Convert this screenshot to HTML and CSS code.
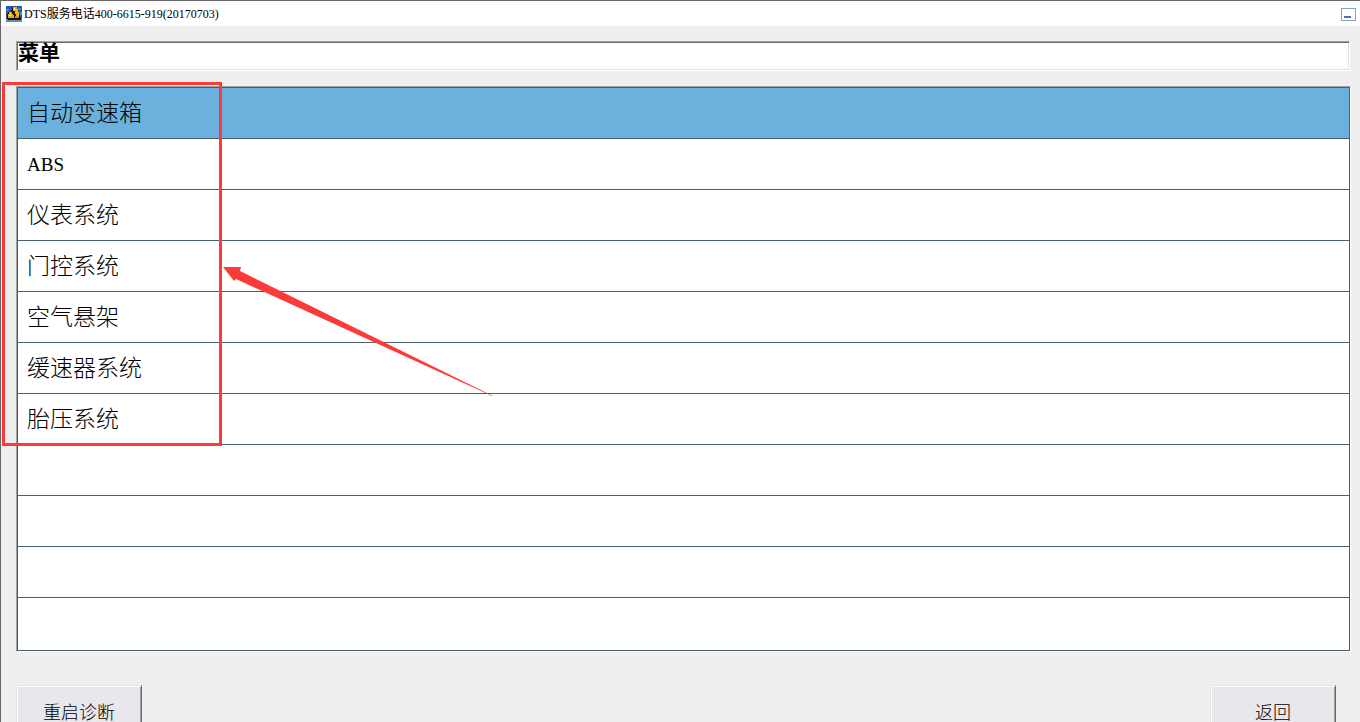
FILE: index.html
```html
<!DOCTYPE html>
<html lang="zh-CN">
<head>
<meta charset="utf-8">
<meta name="viewport" content="width=device-width, initial-scale=1">
<title>DTS服务电话400-6615-919(20170703)</title>
<link rel="stylesheet" href="styles.css">
</head>
<body>
<div class="window">
  <header class="titlebar">
    <svg class="app-icon" viewBox="0 0 16 16" shape-rendering="crispEdges" aria-hidden="true">
      <rect width="16" height="16" fill="#2458ae"/>
      <path d="M0 3h3v2H0zM12 2h3v2h-3zM14 6h2v3h-2z" fill="#4384cf"/>
      <path d="M0 13h16v3H0z" fill="#6d88ae"/>
      <path d="M6 1h5v2h1v3h1v3h1v2h1v3H2v-1H1V8h1V6h3V4h1z" fill="#171309"/>
      <path d="M7 1h4v2h1v3h1v4h-3V8H9V5H7z" fill="#f3b414"/>
      <path d="M3 6h3v2h1v1h1v3H2V8h1z" fill="#e9a91c"/>
      <path d="M8 2h1v2H8zM4 7h1v1H4zM3 9h2v1H3z" fill="#fff0a0"/>
      <path d="M9 10h4v2H9z" fill="#d48a17"/>
    </svg>
    <span class="title">DTS服务电话400-6615-919(20170703)</span>
    <button class="minimize" type="button" aria-label="最小化"></button>
  </header>
  <main class="content">
    <h1 class="heading">菜单</h1>
    <div class="list-area">
      <ul class="menu">
        <li class="row"><button class="item selected" type="button">自动变速箱</button></li>
        <li class="row"><button class="item latin" type="button">ABS</button></li>
        <li class="row"><button class="item" type="button">仪表系统</button></li>
        <li class="row"><button class="item" type="button">门控系统</button></li>
        <li class="row"><button class="item" type="button">空气悬架</button></li>
        <li class="row"><button class="item" type="button">缓速器系统</button></li>
        <li class="row"><button class="item" type="button">胎压系统</button></li>
        <li class="row"></li>
        <li class="row"></li>
        <li class="row"></li>
        <li class="row"></li>
      </ul>
      <div class="marker"></div>
      <svg class="arrow" viewBox="0 0 270 130" aria-hidden="true">
        <path d="M0 0H18L17 4L270 129L269 129L13 12L11 14Z" fill="#fc3a38"/>
      </svg>
    </div>
    <footer class="actions">
      <button class="action" type="button">重启诊断</button>
      <button class="action" type="button">返回</button>
    </footer>
  </main>
</div>
</body>
</html>
```
FILE: styles.css
```css
* {
  box-sizing: border-box;
}

body {
  margin: 0;
  background: #efefef;
  color: #000;
  font-family: "Liberation Serif", "Noto Sans CJK SC", serif;
}

button {
  font-family: inherit;
  color: inherit;
}

.window {
  height: 100vh;
  overflow: hidden;
  border-top: 1px solid #666;
  border-left: 1px solid #666;
}

.titlebar {
  display: flex;
  align-items: center;
  height: 25px;
  padding: 0 4px 0 5px;
  background: #fff;
}

.app-icon {
  width: 16px;
  height: 16px;
  margin-right: 2px;
}

.title {
  flex: 1;
  font-size: 12px;
  line-height: 16px;
}

.minimize {
  display: flex;
  align-items: flex-end;
  width: 15px;
  height: 13px;
  margin-top: 2px;
  padding: 0 2px 2px;
  border: 1px solid #86a6bd;
  border-radius: 0;
  background: #fff;
}

.minimize::before {
  content: "";
  width: 7px;
  height: 2px;
  background: #5075a8;
}

.content {
  padding: 15px 9px 0 15px;
}

.heading {
  height: 30px;
  margin: 0 1px 15px 0;
  border: 1px solid;
  border-color: #a0a0a0 #fff #fff #a0a0a0;
  background: #fff;
  box-shadow: inset 1px 1px #696969, inset -1px -1px #e3e3e3;
  padding-left: 1px;
  font-size: 21px;
  line-height: 22px;
  font-weight: 700;
}

.list-area {
  position: relative;
  margin-bottom: 33px;
  border: 1px solid;
  border-color: #a0a0a0 #fff #fff #a0a0a0;
}

.menu {
  margin: 0;
  padding: 0;
  border: 1px solid #4a5f6d;
  list-style: none;
  background: #fff;
}

.row {
  height: 51px;
  border-bottom: 1px solid #4a5f6d;
}

.row:last-child {
  height: 52px;
  border-bottom: 0;
}

.item {
  display: block;
  width: 100%;
  height: 100%;
  padding: 2px 9px 0;
  border: 0;
  background: transparent;
  font-size: 23px;
  font-weight: 300;
  line-height: 48px;
  text-align: left;
}

.latin {
  font-size: 19px;
}

.selected {
  background: #6bb1de;
}

.marker {
  position: absolute;
  top: -5px;
  left: -15px;
  width: 220px;
  height: 364px;
  border: 3px solid #fc3a38;
  pointer-events: none;
}

.arrow {
  position: absolute;
  top: 180px;
  left: 206px;
  width: 270px;
  height: 130px;
  pointer-events: none;
}

.actions {
  display: flex;
  justify-content: space-between;
  padding-right: 15px;
}

.action {
  width: 126px;
  height: 56px;
  padding: 0;
  border: 1px solid;
  border-color: #e3e3e3 #696969 #696969 #e3e3e3;
  border-radius: 0;
  background: #e9e7ec;
  box-shadow: inset 1px 1px #fff, inset -1px -1px #a0a0a0;
  font-size: 18px;
  font-weight: 300;
  line-height: 18px;
}
```
